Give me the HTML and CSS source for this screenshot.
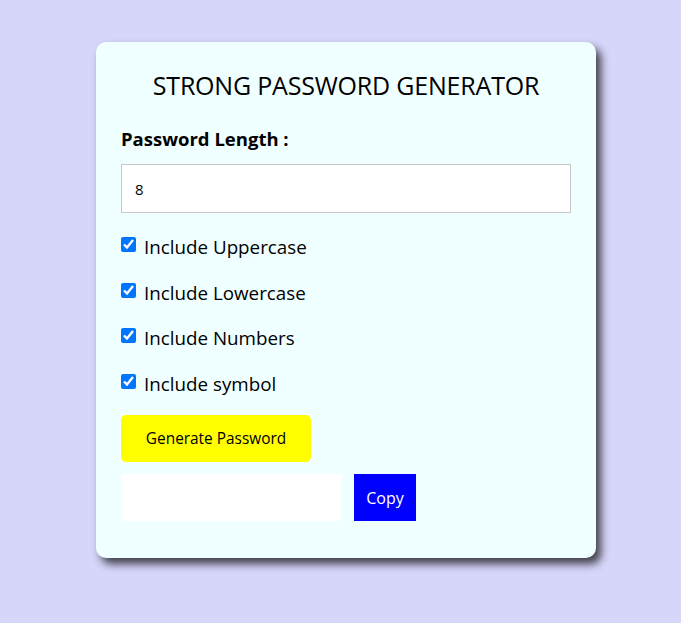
FILE: index.html
```html
<!DOCTYPE html>
<html lang="en">
<head>
<meta charset="utf-8">
<title>Strong Password Generator</title>
<link rel="stylesheet" href="styles.css">
</head>
<body>
<div class="card">
  <h1 class="title">STRONG PASSWORD GENERATOR</h1>
  <label class="length-label" for="len">Password Length :</label>
  <input class="length-input" id="len" type="number" value="8">
  <label class="option"><input type="checkbox" checked><span>Include Uppercase</span></label>
  <label class="option"><input type="checkbox" checked><span>Include Lowercase</span></label>
  <label class="option"><input type="checkbox" checked><span>Include Numbers</span></label>
  <label class="option"><input type="checkbox" checked><span>Include symbol</span></label>
  <button class="generate" type="button">Generate Password</button>
  <div class="output-row">
    <input class="output" type="text" readonly>
    <button class="copy" type="button">Copy</button>
  </div>
</div>
</body>
</html>
```

FILE: styles.css
```css
* { box-sizing: border-box; }
html, body { margin: 0; padding: 0; }
html { background: #d6d5fa; }
body {
  min-height: 623px;
  font-family: "Open Sans", "Noto Sans", sans-serif;
  color: #000;
  display: flex;
  justify-content: center;
  align-items: flex-start;
  padding-top: 42px;
  padding-left: 11px;
  padding-bottom: 40px;
}
.card {
  width: 500px;
  height: 516px;
  background: #f0ffff;
  border-radius: 10px;
  box-shadow: 5px 6px 8px rgba(0, 0, 0, 0.7);
  padding: 25px;
  display: flex;
  flex-direction: column;
  align-items: flex-start;
}
.title {
  align-self: stretch;
  text-align: center;
  font-size: 25px;
  font-weight: 400;
  margin: 1.5px 0 0;
  line-height: 32px;
  letter-spacing: -0.2px;
}
.length-label {
  font-weight: 700;
  font-size: 18.5px;
  line-height: 24px;
  margin-top: 26.5px;
}
.length-input {
  margin-top: 13px;
  width: 450px;
  height: 49px;
  border: 1px solid #c8c8c8;
  background: #fff;
  padding: 0 13px;
  font-family: inherit;
  font-size: 15px;
  color: #000;
}
.option {
  display: flex;
  align-items: flex-start;
  gap: 8px;
  font-size: 18.8px;
  line-height: 24px;
  margin-top: 22px;
  height: 24px;
}
.option + .option { margin-top: 21.5px; }
.option input {
  margin: 2px 0 0;
  width: 15px;
  height: 15px;
  accent-color: #0075ff;
}
.generate {
  margin-top: 19px;
  width: 190px;
  height: 47px;
  background: #ffff00;
  border: none;
  border-radius: 5px;
  font-family: inherit;
  font-size: 15.4px;
  color: #000;
}
.output-row {
  margin-top: 12px;
  display: flex;
  gap: 13px;
}
.output {
  width: 220px;
  height: 47px;
  border: none;
  background: #fff;
}
.copy {
  width: 62px;
  height: 47px;
  border: none;
  background: #0000ff;
  color: #fff;
  font-family: inherit;
  font-size: 16px;
  padding-top: 3px;
}
```
